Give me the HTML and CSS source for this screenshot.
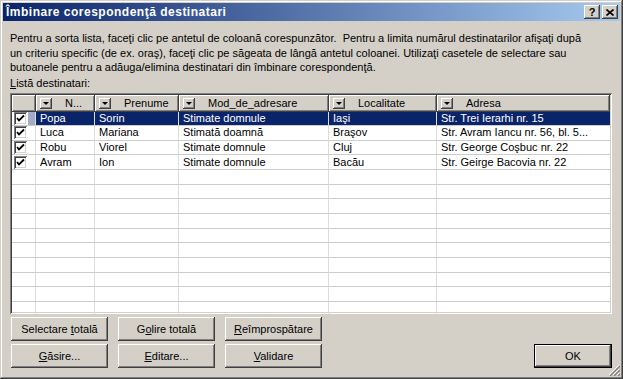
FILE: index.html
```html
<!DOCTYPE html>
<html lang="ro">
<head>
    <meta charset="UTF-8">
    <title>Îmbinare corespondenţă destinatari</title>
    <link rel="stylesheet" href="styles.css">
</head>
<body>
    <div class="window">
        <div class="titlebar">
            <span class="title">Îmbinare corespondenţă destinatari</span>
            <div class="caption-btns">
                <span class="cap-btn">?</span>
                <span class="cap-btn">
                    <svg width="8" height="7" viewBox="0 0 8 7"><path d="M0.5 0.5 L7.5 6.5 M7.5 0.5 L0.5 6.5" stroke="#000" stroke-width="1.6"/></svg>
                </span>
            </div>
        </div>

        <div class="content">
            <p class="intro">Pentru a sorta lista, faceţi clic pe antetul de coloană corespunzător.&nbsp; Pentru a limita numărul destinatarilor afişaţi după<br>un criteriu specific (de ex. oraş), faceţi clic pe săgeata de lângă antetul coloanei. Utilizaţi casetele de selectare sau<br>butoanele pentru a adăuga/elimina destinatari din îmbinare corespondenţă.</p>
            <div class="label"><u>L</u>istă destinatari:</div>

            <div class="list">
                <table class="grid">
                    <colgroup>
                        <col style="width:24px">
                        <col style="width:59px">
                        <col style="width:84px">
                        <col style="width:150px">
                        <col style="width:108px">
                        <col>
                    </colgroup>
                    <thead>
                        <tr>
                            <th></th>
                            <th><span class="drop"></span><span class="hd">N...</span></th>
                            <th><span class="drop"></span><span class="hd">Prenume</span></th>
                            <th><span class="drop"></span><span class="hd">Mod_de_adresare</span></th>
                            <th><span class="drop"></span><span class="hd">Localitate</span></th>
                            <th><span class="drop"></span><span class="hd">Adresa</span></th>
                        </tr>
                    </thead>
                    <tbody>
                        <tr class="selected">
                            <td class="chk"><span class="box"></span></td>
                            <td>Popa</td>
                            <td>Sorin</td>
                            <td>Stimate domnule</td>
                            <td>Iaşi</td>
                            <td>Str. Trei Ierarhi nr. 15</td>
                        </tr>
                        <tr>
                            <td class="chk"><span class="box"></span></td>
                            <td>Luca</td>
                            <td>Mariana</td>
                            <td>Stimată doamnă</td>
                            <td>Braşov</td>
                            <td>Str. Avram Iancu nr. 56, bl. 5...</td>
                        </tr>
                        <tr>
                            <td class="chk"><span class="box"></span></td>
                            <td>Robu</td>
                            <td>Viorel</td>
                            <td>Stimate domnule</td>
                            <td>Cluj</td>
                            <td>Str. George Coşbuc nr. 22</td>
                        </tr>
                        <tr>
                            <td class="chk"><span class="box"></span></td>
                            <td>Avram</td>
                            <td>Ion</td>
                            <td>Stimate domnule</td>
                            <td>Bacău</td>
                            <td>Str. Geirge Bacovia nr. 22</td>
                        </tr>
                        <tr><td></td><td></td><td></td><td></td><td></td><td></td></tr>
                        <tr><td></td><td></td><td></td><td></td><td></td><td></td></tr>
                        <tr><td></td><td></td><td></td><td></td><td></td><td></td></tr>
                        <tr><td></td><td></td><td></td><td></td><td></td><td></td></tr>
                        <tr><td></td><td></td><td></td><td></td><td></td><td></td></tr>
                        <tr><td></td><td></td><td></td><td></td><td></td><td></td></tr>
                        <tr><td></td><td></td><td></td><td></td><td></td><td></td></tr>
                        <tr><td></td><td></td><td></td><td></td><td></td><td></td></tr>
                        <tr><td></td><td></td><td></td><td></td><td></td><td></td></tr>
                        <tr><td></td><td></td><td></td><td></td><td></td><td></td></tr>
                        <tr><td></td><td></td><td></td><td></td><td></td><td></td></tr>
                    </tbody>
                </table>
            </div>

            <div class="actions">
                <div class="btn-grid">
                    <button class="btn">Selectare <u>t</u>otală</button>
                    <button class="btn">G<u>o</u>lire totală</button>
                    <button class="btn"><u>R</u>eîmprospătare</button>
                    <button class="btn"><u>G</u>ăsire...</button>
                    <button class="btn"><u>E</u>ditare...</button>
                    <button class="btn"><u>V</u>alidare</button>
                </div>
                <button class="btn btn-default">OK</button>
            </div>
        </div>

        <svg class="grip" width="12" height="12" viewBox="0 0 12 12">
            <path d="M11 1 L1 11 M11 5 L5 11 M11 9 L9 11" stroke="#fff" stroke-width="1"/>
            <path d="M12 2 L2 12 M12 6 L6 12 M12 10 L10 12" stroke="#808080" stroke-width="1.4"/>
        </svg>
    </div>
</body>
</html>
```

FILE: styles.css
```css
body {
    margin: 0;
    font-family: "Liberation Sans", Arial, sans-serif;
    font-size: 11px;
    color: #000;
}
.window {
    position: relative;
    width: 623px;
    height: 379px;
    box-sizing: border-box;
    padding: 3px;
    background: #d4d0c8;
    box-shadow: inset -1px -1px #404040, inset 1px 1px #d4d0c8, inset -2px -2px #808080, inset 2px 2px #fff;
}
.titlebar {
    height: 18px;
    display: flex;
    align-items: center;
    justify-content: space-between;
    padding: 0 2px 0 3px;
    background: linear-gradient(to right, #0a246a, #a6caf0);
    color: #fff;
}
.title {
    font-weight: bold;
    font-size: 12px;
    letter-spacing: 0.5px;
}
.caption-btns {
    display: flex;
    gap: 2px;
}
.cap-btn {
    width: 16px;
    height: 14px;
    display: flex;
    align-items: center;
    justify-content: center;
    background: #d4d0c8;
    color: #000;
    font-weight: bold;
    font-size: 11px;
    box-sizing: border-box;
    box-shadow: inset -1px -1px #404040, inset 1px 1px #fff, inset -2px -2px #808080;
}
.content {
    padding: 0 8px 0 7px;
}
.intro {
    margin: 10px 0 0;
    line-height: 14.5px;
    white-space: nowrap;
}
.label {
    line-height: 14px;
    margin: 1px 0 3px;
}
.list {
    height: 221px;
    box-sizing: border-box;
    padding: 2px;
    background: #fff;
    overflow: hidden;
    box-shadow: inset 1px 1px #808080, inset -1px -1px #fff, inset 2px 2px #404040, inset -2px -2px #d4d0c8;
}
.grid {
    width: 100%;
    table-layout: fixed;
    border-collapse: separate;
    border-spacing: 0;
}
.grid th {
    height: 17px;
    padding: 0 0 0 4px;
    box-sizing: border-box;
    background: #d4d0c8;
    text-align: left;
    font-weight: normal;
    white-space: nowrap;
    box-shadow: inset -1px -1px #404040, inset 1px 1px #fff, inset -2px -2px #808080;
}
.drop {
    display: inline-block;
    width: 12px;
    height: 11px;
    vertical-align: -2px;
    box-sizing: border-box;
    background: #d4d0c8;
    box-shadow: inset -1px -1px #404040, inset 1px 1px #fff, inset -2px -2px #808080;
    position: relative;
}
.drop::after {
    content: "";
    position: absolute;
    left: 3px;
    top: 4px;
    border-left: 3px solid transparent;
    border-right: 3px solid transparent;
    border-top: 3px solid #000;
}
.hd {
    margin-left: 13px;
}
.grid td {
    height: 14.67px;
    box-sizing: border-box;
    padding: 0 4px;
    border-right: 1px solid #dcdcdc;
    border-bottom: 1px solid #cccccc;
    white-space: nowrap;
    overflow: hidden;
    line-height: 13px;
}
.grid td:last-child {
    border-right: none;
}
.grid td.chk {
    padding: 0 0 0 2px;
}
.box {
    display: block;
    width: 13px;
    height: 13px;
    box-sizing: border-box;
    background: #fff url("data:image/svg+xml;utf8,<svg xmlns='http://www.w3.org/2000/svg' width='13' height='13'><path d='M3 6 L5 8.5 L10 3.5' fill='none' stroke='black' stroke-width='1.8'/></svg>") no-repeat;
    box-shadow: inset 1px 1px #808080, inset -1px -1px #fff, inset 2px 2px #404040, inset -2px -2px #d4d0c8;
}
.selected td {
    background: #0a246a;
    color: #fff;
}
.selected td.chk {
    background: linear-gradient(to right, #fff 16px, #a4abc6 16px);
}
.actions {
    display: flex;
    justify-content: space-between;
    align-items: flex-end;
    margin-top: 3px;
}
.btn-grid {
    display: grid;
    grid-template-columns: repeat(3, 97px);
    grid-auto-rows: 24px;
    gap: 3px 10px;
    margin-left: 1px;
}
.btn {
    font-family: inherit;
    font-size: 11px;
    color: #000;
    background: #d4d0c8;
    border: none;
    padding: 0;
    height: 24px;
    box-shadow: inset -1px -1px #404040, inset 1px 1px #fff, inset -2px -2px #808080, inset 2px 2px #d4d0c8;
}
.btn-default {
    width: 78px;
    border: 1px solid #000;
}
.grip {
    position: absolute;
    right: 3px;
    bottom: 3px;
}
```
